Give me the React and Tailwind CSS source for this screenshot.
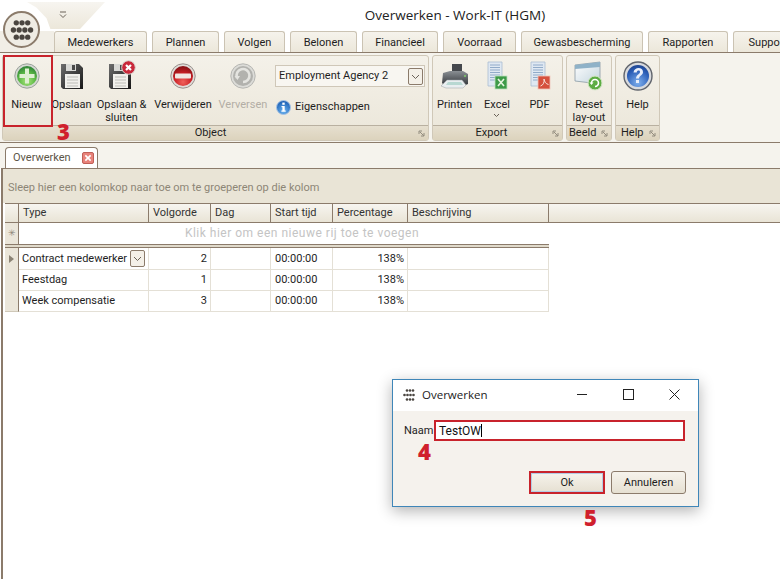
import React from 'react';

const tabs = [
	['Medewerkers', 'w-[93px]'],
	['Plannen', 'w-[67px]'],
	['Volgen', 'w-[61px]'],
	['Belonen', 'w-[67px]'],
	['Financieel', 'w-[76px]'],
	['Voorraad', 'w-[73px]'],
	['Gewasbescherming', 'w-[122px]'],
	['Rapporten', 'w-[80px]'],
	['Support', 'w-[70px]'],
];

const rows = [
	{ type: 'Contract medewerker', order: 2, combo: true, current: true },
	{ type: 'Feestdag', order: 1 },
	{ type: 'Week compensatie', order: 3 },
];

const gridCols = 'grid grid-cols-[14px_130px_62px_60px_62px_75px_141px]';

function PlusIcon() {
	return (
		<svg width="26" height="26" viewBox="0 0 26 26">
			<defs>
				<radialGradient id="plusFill" cx="50%" cy="75%" r="70%">
					<stop offset="0%" stopColor="#a8e47c" />
					<stop offset="60%" stopColor="#5ab844" />
					<stop offset="100%" stopColor="#35893a" />
				</radialGradient>
			</defs>
			<circle cx="13" cy="13" r="12.2" fill="#d5d8d3" stroke="#9aa29a" />
			<circle cx="13" cy="13" r="10" fill="url(#plusFill)" />
			<path d="M11 5.500h4v5.500h5.500v4H15v5.500h-4V15H5.500v-4H11z" fill="#dff0d2" />
		</svg>
	);
}

function FloppyIcon() {
	return (
		<svg width="24" height="28" viewBox="0 0 24 28">
			<defs>
				<linearGradient id="floppyBody" x1="0" y1="0" x2="1" y2="1">
					<stop offset="0%" stopColor="#6d6d6d" />
					<stop offset="100%" stopColor="#161616" />
				</linearGradient>
			</defs>
			<path d="M1 2h18l4 4v21H3l-2-2z" fill="url(#floppyBody)" />
			<rect x="6" y="2" width="10" height="7" fill="#d9d9d6" />
			<rect x="12" y="3" width="3" height="5" fill="#4a4a4a" />
			<rect x="5" y="12" width="15" height="14" fill="#f1f0ec" />
			<path d="M7 15h11M7 18h11M7 21h11M7 24h11" stroke="#bdbdb8" />
		</svg>
	);
}

function SaveCloseIcon() {
	return (
		<div className="relative w-[28px] h-[28px]">
			<FloppyIcon />
			<svg className="absolute left-[13px] top-[-2px]" width="15" height="15" viewBox="0 0 15 15">
				<circle cx="7.500" cy="7.500" r="6.800" fill="#c9283a" stroke="#d8d5d0" />
				<path d="M5 5l5 5M10 5l-5 5" stroke="#fff" strokeWidth="2.200" />
			</svg>
		</div>
	);
}

function DeleteIcon() {
	return (
		<svg width="26" height="26" viewBox="0 0 26 26">
			<defs>
				<radialGradient id="delFill" cx="50%" cy="80%" r="75%">
					<stop offset="0%" stopColor="#f0605a" />
					<stop offset="60%" stopColor="#c81e24" />
					<stop offset="100%" stopColor="#8c1216" />
				</radialGradient>
			</defs>
			<circle cx="13" cy="13" r="12.200" fill="#e0dcd8" stroke="#98908c" />
			<circle cx="13" cy="13" r="10" fill="url(#delFill)" />
			<rect x="5" y="10.500" width="16" height="5" rx="1" fill="#f0e6e2" />
		</svg>
	);
}

function RefreshIcon() {
	return (
		<svg width="26" height="26" viewBox="0 0 26 26">
			<circle cx="13" cy="13" r="12.200" fill="#dcdcd8" stroke="#b6b6b2" />
			<circle cx="13" cy="13" r="10" fill="#b2b2ae" />
			<path d="M7 15a6.500 6.500 0 1 1 6 4" fill="none" stroke="#e4e4e0" strokeWidth="2.600" />
			<path d="M4.500 13l5.500 0-2.500 4z" fill="#e4e4e0" />
		</svg>
	);
}

function InfoIcon() {
	return (
		<svg width="15" height="15" viewBox="0 0 15 15">
			<defs>
				<radialGradient id="infoFill" cx="50%" cy="75%" r="70%">
					<stop offset="0%" stopColor="#6cb4f0" />
					<stop offset="100%" stopColor="#1c5fb4" />
				</radialGradient>
			</defs>
			<circle cx="7.500" cy="7.500" r="7" fill="url(#infoFill)" stroke="#a8c4e4" />
			<rect x="6.300" y="2.600" width="2.400" height="2.200" fill="#fff" />
			<path d="M5.500 6h3.200v4.600h1v1.200H5.400v-1.200h1V7.200h-.9z" fill="#fff" />
		</svg>
	);
}

function PrinterIcon() {
	return (
		<svg width="30" height="28" viewBox="0 0 30 28">
			<defs>
				<linearGradient id="printBody" x1="0" y1="0" x2="0" y2="1">
					<stop offset="0%" stopColor="#8a8f94" />
					<stop offset="100%" stopColor="#2f3236" />
				</linearGradient>
			</defs>
			<path d="M12 2h10v9H12z" fill="#45484d" />
			<path d="M3 11l7-2h13l5 3v10l-5 2H5l-3-3z" fill="url(#printBody)" />
			<path d="M7 18h15l4 5-3 3H6l-5-2z" fill="#e9eef0" stroke="#9aa0a4" strokeWidth="0.500" />
			<path d="M8 20h13l2 3H6z" fill="#b8d8d2" />
			<circle cx="25" cy="14" r="1" fill="#7fd06a" />
		</svg>
	);
}

function DocLines() {
	return (
		<>
			<path d="M3 1h14v24H3z" fill="#dfe8f2" stroke="#a9bdd2" strokeWidth="0.800" />
			<path d="M5 4h10M5 6.500h10M5 9h10M5 11.500h10M5 14h10M5 16.500h10M5 19h10" stroke="#88a4c4" strokeWidth="0.900" />
		</>
	);
}

function ExcelIcon() {
	return (
		<svg width="24" height="30" viewBox="0 0 24 30">
			<DocLines />
			<rect x="10" y="15" width="12" height="13" fill="#3d9a48" stroke="#bfe0bf" strokeWidth="0.800" />
			<path d="M13 18l6 7M19 18l-6 7" stroke="#e6f4e0" strokeWidth="1.600" />
		</svg>
	);
}

function PdfIcon() {
	return (
		<svg width="24" height="30" viewBox="0 0 24 30">
			<DocLines />
			<rect x="10" y="15" width="12" height="13" fill="#d5503e" stroke="#f0c4b8" strokeWidth="0.800" />
			<path d="M12.500 25c3-1 4-4 3.500-7 .5 3 2 5 4.500 5.500" fill="none" stroke="#f7e2da" strokeWidth="1" />
		</svg>
	);
}

function ResetIcon() {
	return (
		<svg width="30" height="30" viewBox="0 0 30 30">
			<defs>
				<linearGradient id="winBody" x1="0" y1="0" x2="1" y2="1">
					<stop offset="0%" stopColor="#ffffff" />
					<stop offset="100%" stopColor="#c2d4de" />
				</linearGradient>
			</defs>
			<path d="M1 4l25-3v22l-25-3z" fill="url(#winBody)" stroke="#8a9aa4" strokeWidth="0.800" />
			<path d="M1 4l25-3v5l-25 2z" fill="#8fb2c8" />
			<circle cx="21" cy="22" r="7" fill="#5dac44" stroke="#d8e8cc" />
			<path d="M17.500 22a3.500 3.500 0 1 1 3.500 3.500" fill="none" stroke="#fff" strokeWidth="1.600" />
			<path d="M15.500 21.500h4l-2 2.500z" fill="#fff" />
		</svg>
	);
}

function HelpIcon() {
	return (
		<svg width="30" height="30" viewBox="0 0 30 30">
			<defs>
				<radialGradient id="helpFill" cx="50%" cy="80%" r="80%">
					<stop offset="0%" stopColor="#7fb0ee" />
					<stop offset="70%" stopColor="#2c5fb8" />
					<stop offset="100%" stopColor="#1e4490" />
				</radialGradient>
			</defs>
			<circle cx="15" cy="15" r="14" fill="#d8dade" stroke="#60646c" strokeWidth="1.400" />
			<circle cx="15" cy="15" r="11" fill="url(#helpFill)" />
			<path d="M10.500 11.500c.5-6 9.500-6 9.500-.5 0 3.500-4 3.500-4 6.500h-3c0-4 4-4 4-6.500 0-2-3-2-3.300.5z" fill="#e8eefa" />
			<rect x="13" y="19" width="3" height="3" fill="#e8eefa" />
		</svg>
	);
}

function Launcher() {
	return (
		<svg className="absolute right-[3px] bottom-[3px]" width="7" height="7" viewBox="0 0 7 7">
			<path d="M1 1h3M1 1v3M2 2l3.500 3.500M6 3v3H3" fill="none" stroke="#7f786c" strokeWidth="0.800" />
		</svg>
	);
}

function ComboArrow() {
	return (
		<span className="w-[15px] h-[17px] border border-[#8b7b6b] rounded-[2px] bg-[#f4f0e8] flex items-center justify-center">
			<svg width="9" height="6" viewBox="0 0 9 6">
				<path d="M1 1l3.500 3.500L8 1" fill="none" stroke="#6a6258" />
			</svg>
		</span>
	);
}

function BigButton({ icon, label, disabled, className }) {
	return (
		<div className={`flex flex-col items-center h-[70px] pt-[3px] ${className}`}>
			<div className="h-[34px] flex items-center justify-center">{icon}</div>
			<div className={`mt-[5px] text-center leading-[13px] whitespace-pre-line ${disabled ? 'text-[#b3aea5]' : 'text-[#1e1e1e]'}`}>
				{label}
			</div>
		</div>
	);
}

function Group({ title, className, captionClass = 'text-center', children, launcher = true }) {
	return (
		<div className={`h-[86px] flex flex-col border border-[#d0c8b8] rounded-[3px] bg-gradient-to-b from-[#f4f1e9] to-[#ebe6d9] ${className}`}>
			<div className="flex-1 flex min-h-0">{children}</div>
			<div className={`relative h-[15px] leading-[14px] border-t border-[#b9b0a0] bg-gradient-to-b from-[#e6dfcf] to-[#dcd3bd] text-[#1e1e1e] ${captionClass}`}>
				{title}
				{launcher && <Launcher />}
			</div>
		</div>
	);
}

function Ribbon() {
	return (
		<div className="h-[91px] flex items-start gap-[3px] pl-[2px] pt-[2px] bg-[#f5f3ed] border-t border-[#8b7b6b] border-b">
			<Group title="Object" className="w-[427px]" captionClass="text-center pr-[10px]">
				<BigButton icon={<PlusIcon />} label="Nieuw" className="w-[47px]" />
				<BigButton icon={<FloppyIcon />} label="Opslaan" className="w-[43px]" />
				<BigButton icon={<SaveCloseIcon />} label={'Opslaan &\nsluiten'} className="w-[57px]" />
				<BigButton icon={<DeleteIcon />} label="Verwijderen" className="w-[66px]" />
				<BigButton icon={<RefreshIcon />} label="Verversen" disabled className="w-[54px]" />
				<div className="flex flex-col pl-[5px] pt-[9px]">
					<div className="w-[150px] h-[22px] border border-[#cfc7b8] bg-[#f8f6f1] flex items-center justify-between pl-[3px] pr-[1px] pt-px text-[#1e1e1e]">
						Employment Agency 2
						<ComboArrow />
					</div>
					<div className="flex items-center gap-[4px] mt-[12px] pl-[1px] text-[#1e1e1e]">
						<InfoIcon />
						Eigenschappen
					</div>
				</div>
			</Group>
			<Group title="Export" className="w-[131px]" captionClass="text-center pr-[12px]">
				<BigButton icon={<PrinterIcon />} label="Printen" className="w-[43px]" />
				<div className="relative">
					<BigButton icon={<ExcelIcon />} label="Excel" className="w-[42px]" />
					<svg className="absolute left-[17px] top-[57px]" width="7" height="5" viewBox="0 0 7 5">
						<path d="M1 1l2.500 2.500L6 1" fill="none" stroke="#6a6258" />
					</svg>
				</div>
				<BigButton icon={<PdfIcon />} label="PDF" className="w-[43px]" />
			</Group>
			<Group title="Beeld" className="w-[46px]" captionClass="pl-[2px]">
				<BigButton icon={<ResetIcon />} label={'Reset\nlay-out'} className="w-full" />
			</Group>
			<Group title="Help" className="w-[45px]" captionClass="pl-[5px]">
				<BigButton icon={<HelpIcon />} label="Help" className="w-full" />
			</Group>
		</div>
	);
}

function Logo() {
	return (
		<div className="absolute left-[3px] top-[11px] w-[37px] h-[37px] rounded-full border-2 border-[#8b7b6b] bg-[#efece4] flex items-center justify-center">
			<svg width="24" height="20" viewBox="0 0 25 21">
				{[[6.500, 3], [12.500, 3], [18.500, 3], [3.500, 10.500], [9.500, 10.500], [15.500, 10.500], [21.500, 10.500], [6.500, 18], [12.500, 18], [18.500, 18]].map(([cx, cy], i) => (
					<circle key={i} cx={cx} cy={cy} r="2.800" fill="#4a4540" />
				))}
			</svg>
		</div>
	);
}

function TitleBar() {
	return (
		<div className="h-[31px] bg-white flex justify-center pl-[130px] pt-[6px] text-[13.5px] leading-[19px] text-[#222] font-['Open_Sans',sans-serif]">
			Overwerken - Work-IT (HGM)
		</div>
	);
}

function TabStrip() {
	return (
		<div className="h-[21px] bg-white flex gap-[5px] pl-[54px] overflow-hidden">
			{tabs.map(([name, w]) => (
				<div key={name} className={`${w} shrink-0 h-[21px] border border-b-0 border-[#cbc3b3] rounded-t-[3px] bg-gradient-to-b from-[#f6f3ec] to-[#ece7da] text-center leading-[21px] text-[#1e1e1e]`}>
					{name}
				</div>
			))}
		</div>
	);
}

function Grid() {
	const head = ['Type', 'Volgorde', 'Dag', 'Start tijd', 'Percentage', 'Beschrijving'];
	return (
		<div className="pl-[2px]">
			<div className="h-[19px] flex bg-gradient-to-b from-[#f7f5f0] to-[#e9e4d6] border-t border-[#8b7b6b]">
				<div className={gridCols}>
					<div className="border-r border-[#8b7b6b]" />
					{head.map((h) => (
						<div key={h} className="border-r border-[#8b7b6b] pl-[4px] leading-[17px] text-[#333]">{h}</div>
					))}
				</div>
			</div>
			<div className="h-[22px] flex border-t border-[#8b7b6b] bg-white">
				<div className="w-[14px] bg-[#ebe6da] border-r border-[#8b7b6b] text-center text-[9px] leading-[20px] text-[#8c8578]">✳</div>
				<div className="w-[530px] text-center text-[12px] tracking-[0.5px] leading-[20px] text-[#c4c4c4] pl-[36px]">Klik hier om een nieuwe rij toe te voegen</div>
			</div>
			<div className="w-[544px] h-[4px] bg-[#e0dacb] border-t border-b border-[#8b7b6b]" />
			{rows.map((r) => (
				<div key={r.type} className={`${gridCols} h-[21px] leading-[21px] text-[#1e1e1e]`}>
					<div className="bg-[#ebe6da] border-r border-b border-[#cfc8b8] border-r-[#8b7b6b] flex items-center justify-center">
						{r.current && (
							<svg width="5" height="8" viewBox="0 0 5 8">
								<path d="M0 0l5 4-5 4z" fill="#8b8375" />
							</svg>
						)}
					</div>
					<div className="border-r border-b border-[#e4e0d6] pl-[3px] pr-[3px] flex items-center justify-between whitespace-nowrap">
						{r.type}
						{r.combo && <ComboArrow />}
					</div>
					<div className="border-r border-b border-[#e4e0d6] text-right pr-[3px]">{r.order}</div>
					<div className="border-r border-b border-[#e4e0d6]" />
					<div className="border-r border-b border-[#e4e0d6] pl-[4px]">00:00:00</div>
					<div className="border-r border-b border-[#e4e0d6] text-right pr-[3px]">138%</div>
					<div className="border-r border-b border-[#e4e0d6]" />
				</div>
			))}
		</div>
	);
}

function Dialog() {
	return (
		<div className="absolute left-[392px] top-[379px] w-[307px] h-[128px] border border-[#3f86b8] bg-[#f5f2ed] shadow-[0_4px_14px_rgba(0,0,0,0.3)]">
			<div className="h-[31px] bg-white flex items-center pl-[10px] pb-[2px] text-[11.5px] font-['Open_Sans',sans-serif] text-[#222]">
				<svg width="13" height="12" viewBox="0 0 13 12">
					{[[4, 1.500], [7, 1.500], [10, 1.500], [1.500, 6], [4.500, 6], [7.500, 6], [10.500, 6], [4, 10.500], [7, 10.500], [10, 10.500]].map(([cx, cy], i) => (
						<circle key={i} cx={cx} cy={cy} r="1.300" fill="#4a4540" />
					))}
				</svg>
				<span className="ml-[6px]">Overwerken</span>
				<div className="ml-auto flex items-center gap-[35px] pr-[18px]">
					<svg width="11" height="11" viewBox="0 0 11 11"><path d="M0 5.500h10" stroke="#222" /></svg>
					<svg width="11" height="11" viewBox="0 0 11 11"><rect x="0.500" y="0.500" width="10" height="10" fill="none" stroke="#222" /></svg>
					<svg width="11" height="11" viewBox="0 0 11 11"><path d="M.500.500l10 10M10.500.500l-10 10" stroke="#222" /></svg>
				</div>
			</div>
			<div className="flex items-center mt-[9px] pl-[11px] pr-[13px] text-[#1e1e1e]">
				<span className="w-[30px] pt-[2px]">Naam</span>
				<div className="flex-1 h-[21px] bg-white border-2 border-[#c8232c] pl-[3px] flex items-center text-[12px] text-[#111]">
					TestOW<span className="w-px h-[13px] bg-black" />
				</div>
			</div>
			<div className="absolute right-[12px] top-[91px] flex gap-[6px] text-[#1e1e1e]">
				<div className="w-[76px] h-[23px] border-2 border-[#c8232c] bg-gradient-to-b from-[#f6f3ec] to-[#e6e0d2] shadow-[inset_0_0_0_1px_#b4cce4] text-center leading-[19px]">Ok</div>
				<div className="w-[75px] h-[23px] border border-[#8b7b6b] rounded-[3px] bg-gradient-to-b from-[#f6f3ec] to-[#e6e0d2] text-center leading-[21px]">Annuleren</div>
			</div>
		</div>
	);
}

function Mark({ className, children }) {
	return (
		<span className={`absolute text-[22px] leading-[22px] font-extrabold text-[#d0202c] font-['Open_Sans',sans-serif] ${className}`}>
			{children}
		</span>
	);
}

export default function App() {
	return (
		<div className="relative w-[780px] h-[579px] overflow-hidden bg-white text-[11px] font-['Roboto',sans-serif]">
			<TitleBar />
			<TabStrip />
			<Ribbon />
			<div className="h-[25px] bg-[#f5f3ed] pl-[5px] pt-[4px]">
				<div className="relative w-[93px] h-[21px] border border-b-0 border-[#8b7b6b] rounded-t-[4px] bg-white flex items-center pl-[7px] pt-px text-[#5c5648]">
					Overwerken
					<span className="absolute left-[76px] top-[4px] w-[12px] h-[12px] bg-[#e8827a] border border-[#c06058] rounded-[2px] flex items-center justify-center">
						<svg width="8" height="8" viewBox="0 0 9 9"><path d="M1.500 1.500l6 6M7.500 1.500l-6 6" stroke="#fff" strokeWidth="1.800" /></svg>
					</span>
				</div>
			</div>
			<div className="border-l-2 border-[#8b7b6b] ml-[1px]">
				<div className="h-[35px] bg-[#e9e4d6] border-t border-[#8b7b6b] pl-[5px] leading-[37px] text-[#8d8676]">
					Sleep hier een kolomkop naar toe om te groeperen op die kolom
				</div>
				<Grid />
				<div className="h-[268px]" />
			</div>

			<div className="absolute left-0 top-[31px] w-[54px] h-[21px] bg-[#f1eee6]" />
			<Logo />
			<div className="absolute left-[27px] top-[2px] w-[78px] h-[27px] bg-gradient-to-b from-[#f7f5f0] to-[#ece7da] [clip-path:polygon(0_0,100%_0,68%_100%,30%_100%,25%_60%,12%_20%)]">
				<svg className="ml-[32px] mt-[9px]" width="8" height="8" viewBox="0 0 8 8">
					<path d="M1 1h6M1 3.500l3 3 3-3" fill="none" stroke="#6a6258" />
				</svg>
			</div>

			<div className="absolute left-[3px] top-[55px] w-[50px] h-[72px] border-2 border-[#c8232c]" />
			<Mark className="left-[57px] top-[120px]">3</Mark>
			<Dialog />
			<Mark className="left-[418px] top-[440px]">4</Mark>
			<Mark className="left-[584px] top-[506px]">5</Mark>
		</div>
	);
}
